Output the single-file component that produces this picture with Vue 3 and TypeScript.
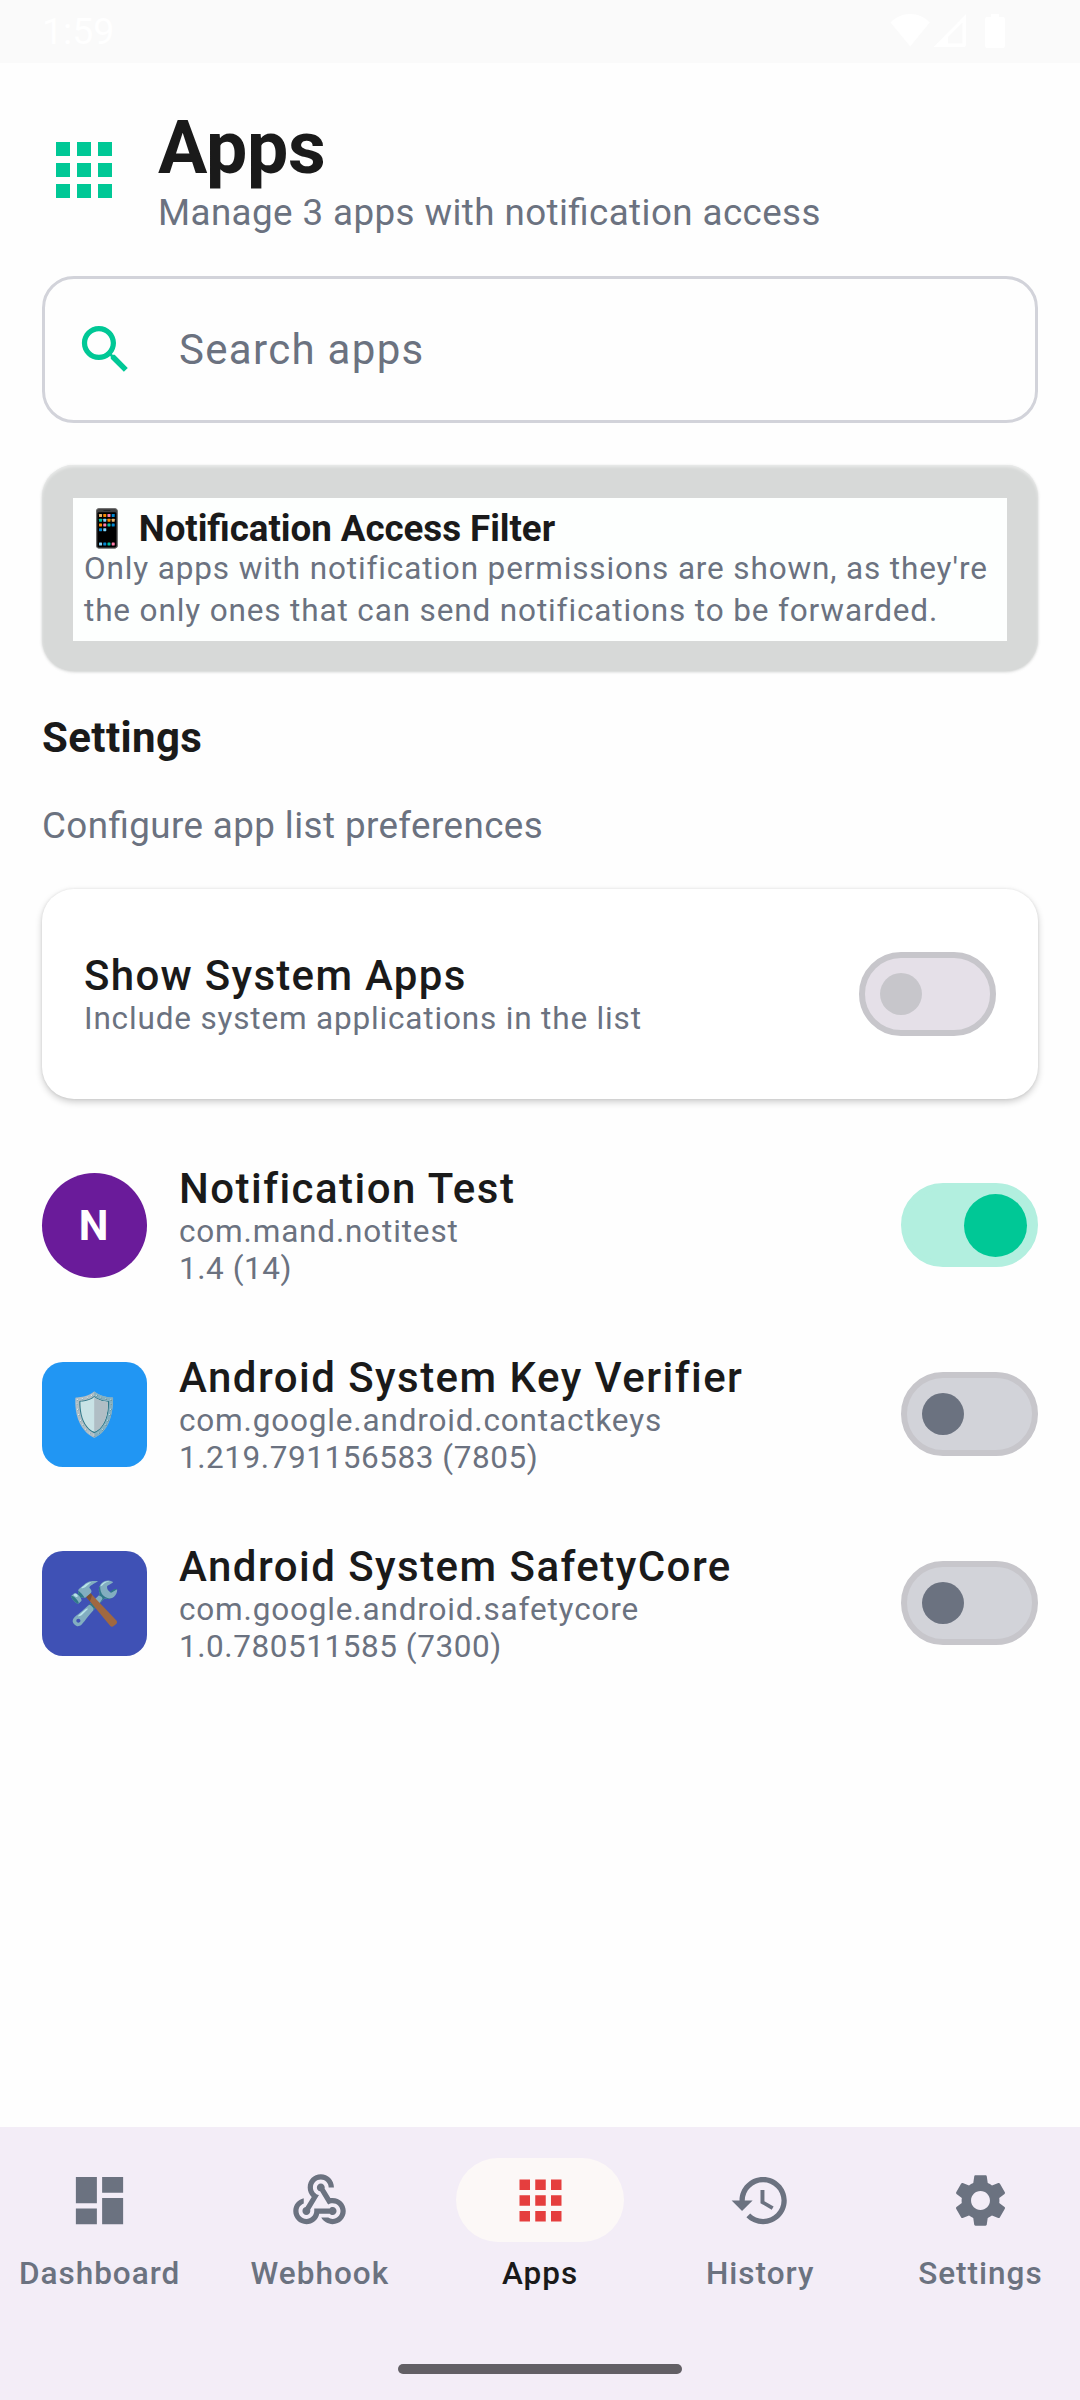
<script setup lang="ts">
import { ref } from 'vue'

interface AppEntry {
  name: string
  pkg: string
  version: string
  glyph: string
  color: string
  round: boolean
  enabled: boolean
}

interface NavEntry {
  label: string
  path: string
}

const ICONS = {
  apps: 'M4,8h4L8,4L4,4v4zM10,20h4v-4h-4v4zM4,20h4v-4L4,16v4zM4,14h4v-4L4,10v4zM10,14h4v-4h-4v4zM16,4v4h4L20,4h-4zM10,8h4L14,4h-4v4zM16,14h4v-4h-4v4zM16,20h4v-4h-4v4z',
  search:
    'M15.5,14h-0.79l-0.28,-0.27C15.41,12.59 16,11.11 16,9.5 16,5.91 13.09,3 9.5,3S3,5.91 3,9.5 5.91,16 9.5,16c1.61,0 3.09,-0.59 4.23,-1.57l0.27,0.28v0.79l5,4.99L20.49,19l-4.99,-5zM9.5,14C7.01,14 5,11.99 5,9.5S7.01,5 9.5,5 14,7.01 14,9.5 11.99,14 9.5,14z',
  dashboard: 'M3,13h8L11,3L3,3v10zM3,21h8v-6L3,15v6zM13,21h8L21,11h-8v10zM13,3v6h8L21,3h-8z',
  webhook:
    'M10,15l5.88,0c0.27-0.31,0.67-0.5,1.12-0.5c0.83,0,1.5,0.67,1.5,1.5c0,0.83-0.67,1.5-1.5,1.5c-0.44,0-0.84-0.19-1.12-0.5l-3.98,0c-0.46,2.28-2.48,4-4.9,4c-2.76,0-5-2.24-5-5c0-2.42,1.72-4.44,4-4.9l0,2.07C4.84,13.58,4,14.7,4,16c0,1.65,1.35,3,3,3s3-1.35,3-3V15z M12.5,4c1.65,0,3,1.35,3,3h2c0-2.76-2.24-5-5-5l0,0c-2.76,0-5,2.24-5,5c0,1.43,0.6,2.71,1.55,3.62l-2.35,3.9C6.02,14.66,5.5,15.27,5.5,16c0,0.83,0.67,1.5,1.5,1.5s1.5-0.67,1.5-1.5c0-0.16-0.02-0.31-0.07-0.45l3.38-5.63C10.49,9.61,9.5,8.42,9.5,7C9.5,5.35,10.85,4,12.5,4z M17,13c-0.64,0-1.23,0.2-1.72,0.54l-3.05-5.07C11.53,8.35,11,7.74,11,7c0-0.83,0.67-1.5,1.5-1.5S14,6.17,14,7c0,0.15-0.02,0.29-0.06,0.43l2.19,3.65C16.41,11.03,16.7,11,17,11l0,0c2.76,0,5,2.24,5,5c0,2.76-2.24,5-5,5c-1.85,0-3.47-1.01-4.33-2.5l2.67,0C15.82,18.82,16.39,19,17,19c1.65,0,3-1.35,3-3S18.65,13,17,13z',
  history:
    'M13,3c-4.97,0 -9,4.03 -9,9L1,12l3.89,3.89 0.07,0.14L9,12L6,12c0,-3.87 3.13,-7 7,-7s7,3.13 7,7 -3.13,7 -7,7c-1.93,0 -3.68,-0.79 -4.94,-2.06l-1.42,1.42C8.27,19.99 10.51,21 13,21c4.97,0 9,-4.03 9,-9s-4.03,-9 -9,-9zM12,8v5l4.28,2.54 0.72,-1.21 -3.5,-2.08L13.5,8L12,8z',
  settings:
    'M19.14,12.94c0.04,-0.3 0.06,-0.61 0.06,-0.94c0,-0.32 -0.02,-0.64 -0.07,-0.94l2.03,-1.58c0.18,-0.14 0.23,-0.41 0.12,-0.61l-1.92,-3.32c-0.12,-0.22 -0.37,-0.29 -0.59,-0.22l-2.39,0.96c-0.5,-0.38 -1.03,-0.7 -1.62,-0.94L14.4,2.81c-0.04,-0.24 -0.24,-0.41 -0.48,-0.41h-3.84c-0.24,0 -0.43,0.17 -0.47,0.41L9.25,5.35C8.66,5.59 8.12,5.92 7.63,6.29L5.24,5.33c-0.22,-0.08 -0.47,0 -0.59,0.22L2.74,8.87C2.62,9.08 2.66,9.34 2.86,9.48l2.03,1.58C4.84,11.36 4.8,11.69 4.8,12s0.02,0.64 0.07,0.94l-2.03,1.58c-0.18,0.14 -0.23,0.41 -0.12,0.61l1.92,3.32c0.12,0.22 0.37,0.29 0.59,0.22l2.39,-0.96c0.5,0.38 1.03,0.7 1.62,0.94l0.36,2.54c0.05,0.24 0.24,0.41 0.48,0.41h3.84c0.24,0 0.44,-0.17 0.47,-0.41l0.36,-2.54c0.59,-0.24 1.13,-0.56 1.62,-0.94l2.39,0.96c0.22,0.08 0.47,0 0.59,-0.22l1.92,-3.32c0.12,-0.22 0.07,-0.47 -0.12,-0.61L19.14,12.94zM12,15.6c-1.98,0 -3.6,-1.62 -3.6,-3.6s1.62,-3.6 3.6,-3.6s3.6,1.62 3.6,3.6S13.98,15.6 12,15.6z',
}

const apps = ref<AppEntry[]>([
  { name: 'Notification Test', pkg: 'com.mand.notitest', version: '1.4 (14)', glyph: 'N', color: '#6a1b9a', round: true, enabled: true },
  { name: 'Android System Key Verifier', pkg: 'com.google.android.contactkeys', version: '1.219.791156583 (7805)', glyph: '🛡️', color: '#2196f3', round: false, enabled: false },
  { name: 'Android System SafetyCore', pkg: 'com.google.android.safetycore', version: '1.0.780511585 (7300)', glyph: '🛠️', color: '#3f51b5', round: false, enabled: false },
])

const nav: NavEntry[] = [
  { label: 'Dashboard', path: ICONS.dashboard },
  { label: 'Webhook', path: ICONS.webhook },
  { label: 'Apps', path: ICONS.apps },
  { label: 'History', path: ICONS.history },
  { label: 'Settings', path: ICONS.settings },
]

const active = ref('Apps')
const query = ref('')
</script>

<template>
  <div class="screen">
    <header class="status">
      <span class="time">1:59</span>
      <svg class="status-icons" width="116" height="36" viewBox="0 0 116 36" fill="#fff">
        <path d="M0.5,9.5C6,4 12.5,1 20.2,1S34.500,4 39.800,9.500L20.200,33.500z" />
        <path fill-rule="evenodd" d="M43.500,34L76,1V32a2,2 0 0 1 -2,2zM58,30.500H72.500V9.500L58,24z" />
        <path d="M101,1h8v3h4a2,2 0 0 1 2,2v27a2,2 0 0 1 -2,2H97a2,2 0 0 1 -2,-2V6a2,2 0 0 1 2,-2h4z" />
      </svg>
    </header>

    <main class="content">
      <section class="heading">
        <svg class="heading-icon" viewBox="0 0 24 24"><path :d="ICONS.apps" /></svg>
        <div>
          <h1 class="title">Apps</h1>
          <p class="text-md">Manage 3 apps with notification access</p>
        </div>
      </section>

      <label class="search">
        <svg class="icon" viewBox="0 0 24 24"><path :d="ICONS.search" /></svg>
        <input v-model="query" class="search-input" type="text" placeholder="Search apps" />
      </label>

      <section class="info">
        <div class="info-body">
          <h2 class="info-title"><span class="emoji">📱</span> Notification Access Filter</h2>
          <p class="info-text">Only apps with notification permissions are shown, as they're<br />the only ones that can send notifications to be forwarded.</p>
        </div>
      </section>

      <h2 class="section-title">Settings</h2>
      <p class="text-md">Configure app list preferences</p>

      <section class="card">
        <div>
          <h3 class="name">Show System Apps</h3>
          <p class="text-sm">Include system applications in the list</p>
        </div>
        <span class="switch disabled"><span class="thumb"></span></span>
      </section>

      <ul class="list">
        <li v-for="app in apps" :key="app.pkg" class="row">
          <span class="avatar" :class="{ round: app.round }" :style="{ background: app.color }">{{ app.glyph }}</span>
          <div class="row-text">
            <h3 class="name">{{ app.name }}</h3>
            <p class="text-sm">{{ app.pkg }}</p>
            <p class="text-sm version">{{ app.version }}</p>
          </div>
          <span class="switch" :class="{ on: app.enabled }" @click="app.enabled = !app.enabled"><span class="thumb"></span></span>
        </li>
      </ul>
    </main>

    <nav class="nav">
      <div class="nav-items">
        <a v-for="item in nav" :key="item.label" class="nav-item" :class="{ active: item.label === active }" @click="active = item.label">
          <span class="pill"><svg class="icon" viewBox="0 0 24 24"><path :d="item.path" /></svg></span>
          <span class="nav-label">{{ item.label }}</span>
        </a>
      </div>
      <div class="home-bar"></div>
    </nav>
  </div>
</template>

<style>
body {
  margin: 0;
  background: #fff;
}
</style>

<style scoped>
.screen {
  display: flex;
  flex-direction: column;
  width: 1080px;
  height: 2400px;
  overflow: hidden;
  background: #fefefe;
  color: #1a1a1a;
  font-family: Roboto, 'Noto Color Emoji', sans-serif;
}

h1,
h2,
h3,
p,
ul {
  margin: 0;
  padding: 0;
}

.status {
  display: flex;
  justify-content: space-between;
  align-items: center;
  height: 63px;
  padding: 0 74px 0 42px;
  background: #fafafa;
  box-sizing: border-box;
}

.time {
  font-size: 37.5px;
  line-height: 43px;
  color: #fff;
}

.status-icons {
  margin-bottom: 1px;
}

.content {
  display: flex;
  flex: 1;
  flex-direction: column;
  gap: 42px;
  padding: 42px 42px 0;
}

.heading {
  display: flex;
  align-items: center;
  gap: 32px;
}

.heading-icon {
  width: 84px;
  height: 84px;
  fill: #00c896;
}

.title {
  font-size: 73.5px;
  font-weight: 700;
  line-height: 86px;
  letter-spacing: -0.3px;
}

.text-md {
  font-size: 36.75px;
  line-height: 43px;
  letter-spacing: 0.41px;
  font-feature-settings: 'liga' 1;
  color: #6b7280;
}

.text-sm {
  font-size: 31.5px;
  line-height: 37px;
  letter-spacing: 0.83px;
  color: #6b7280;
}

.version {
  letter-spacing: 0.55px;
}

.icon {
  width: 63px;
  height: 63px;
  flex: none;
  fill: currentColor;
}

.search {
  display: flex;
  align-items: center;
  gap: 42px;
  height: 147px;
  padding-left: 29px;
  border: 3px solid #d2d3da;
  border-radius: 32px;
  box-sizing: border-box;
  color: #00c896;
}

.search-input {
  flex: 1;
  height: 49px;
  padding: 0;
  border: 0;
  outline: 0;
  background: none;
  font: 42px/49px Roboto, sans-serif;
  letter-spacing: 1.31px;
}

.search-input::placeholder {
  color: #6b7280;
  opacity: 1;
}

.info {
  height: 206px;
  padding: 33px 31px 30px;
  border-radius: 32px;
  background: #d7d9d8;
  box-shadow: 0 1px 3px rgba(200, 202, 201, 0.9), inset 0 2px 3px rgba(255, 255, 255, 0.45);
  box-sizing: border-box;
}

.info-body {
  height: 143px;
  padding: 9px 11px 0;
  background: #fdfffe;
  box-sizing: border-box;
}

.info-title {
  font-size: 36.75px;
  font-weight: 700;
  line-height: 43px;
  height: 43px;
  letter-spacing: -0.06px;
  font-feature-settings: 'liga' 1;
}

.info-text {
  margin-top: -2px;
  font-size: 31.5px;
  line-height: 42px;
  letter-spacing: 0.86px;
  white-space: nowrap;
  color: #6b7280;
}

.section-title {
  font-size: 42px;
  font-weight: 700;
  line-height: 49px;
  letter-spacing: 0.39px;
}

.card {
  display: flex;
  align-items: center;
  justify-content: space-between;
  height: 210px;
  padding: 0 42px;
  border-radius: 32px;
  background: #fff;
  box-shadow: 0 3px 7px rgba(0, 0, 0, 0.2), 0 0 3px rgba(0, 0, 0, 0.08);
  box-sizing: border-box;
}

.name {
  font-size: 42px;
  font-weight: 500;
  line-height: 49px;
  letter-spacing: 1.31px;
}

.row .name {
  letter-spacing: 1.46px;
}

.switch {
  position: relative;
  width: 137px;
  height: 84px;
  flex: none;
  border: 6px solid #c7c6cb;
  border-radius: 42px;
  background: #d2d3d9;
  box-sizing: border-box;
}

.thumb {
  position: absolute;
  top: 15px;
  left: 15px;
  width: 42px;
  height: 42px;
  border-radius: 50%;
  background: #6b7280;
}

.switch.disabled {
  background: #e5e0e8;
}

.switch.disabled .thumb {
  background: #c7c6cb;
}

.switch.on {
  border-color: #b2efdf;
  background: #b2efdf;
}

.switch.on .thumb {
  top: 5px;
  left: 57px;
  width: 63px;
  height: 63px;
  background: #00c896;
}

.list {
  display: flex;
  flex-direction: column;
  gap: 66px;
  margin-top: 23px;
  list-style: none;
}

.row {
  display: flex;
  align-items: center;
  height: 123px;
}

.row .switch {
  margin-bottom: 1px;
}

.avatar {
  display: flex;
  align-items: center;
  justify-content: center;
  width: 105px;
  height: 105px;
  border-radius: 21px;
  box-sizing: border-box;
  font-size: 42px;
  line-height: 49px;
  font-weight: 700;
  color: #fff;
}

.avatar.round {
  padding-right: 2px;
  border-radius: 50%;
}

.row-text {
  flex: 1;
  padding-left: 32px;
}

.nav {
  display: flex;
  flex-direction: column;
  align-items: center;
  height: 273px;
  background: #f3edf7;
}

.nav-items {
  display: flex;
  gap: 21px;
  width: 1080px;
  height: 237px;
  padding-top: 31px;
  box-sizing: border-box;
}

.nav-item {
  display: flex;
  flex: 1 1 0;
  flex-direction: column;
  align-items: center;
  gap: 13px;
  min-width: 0;
  color: #6b7280;
}

.pill {
  display: flex;
  align-items: center;
  justify-content: center;
  width: 168px;
  height: 84px;
  border-radius: 42px;
}

.active .pill {
  background: #fcf8f7;
  color: #e53e3e;
}

.nav-label {
  font-size: 31.5px;
  font-weight: 500;
  line-height: 37px;
  letter-spacing: 1px;
}

.active .nav-label {
  color: #1a1a1a;
}

.home-bar {
  width: 284px;
  height: 10px;
  border-radius: 5px;
  background: #625f65;
}
</style>
